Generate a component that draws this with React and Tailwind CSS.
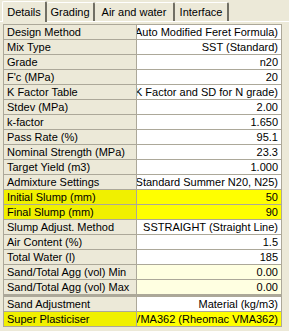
const rows = [
  ['Design Method', '(Auto Modified Feret Formula)'],
  ['Mix Type', 'SST (Standard)'],
  ['Grade', 'n20'],
  ["F'c (MPa)", '20'],
  ['K Factor Table', '(K Factor and SD for N grade)'],
  ['Stdev (MPa)', '2.00'],
  ['k-factor', '1.650'],
  ['Pass Rate (%)', '95.1'],
  ['Nominal Strength (MPa)', '23.3'],
  ['Target Yield (m3)', '1.000'],
  ['Admixture Settings', '(Standard Summer N20, N25)'],
  ['Initial Slump (mm)', '50', 'yellow'],
  ['Final Slump (mm)', '90', 'yellow'],
  ['Slump Adjust. Method', 'SSTRAIGHT (Straight Line)'],
  ['Air Content (%)', '1.5'],
  ['Total Water (l)', '185'],
  ['Sand/Total Agg (vol) Min', '0.00', 'cream'],
  ['Sand/Total Agg (vol) Max', '0.00', 'cream', 'sep'],
  ['Sand Adjustment', 'Material (kg/m3)'],
  ['Super Plasticiser', 'VMA362 (Rheomac VMA362)', 'yellow'],
]

const tabs = [
  ['Details', 'w-[45px]'],
  ['Grading', 'w-[48px]'],
  ['Air and water', 'w-[80px]'],
  ['Interface', 'w-[54px]'],
]

export default function App() {
  return (
    <div
      className="w-[289px] h-[331px] bg-[#ece9d8] text-black text-[11px] leading-none overflow-hidden"
      style={{ fontFamily: '"Liberation Sans", Arial, sans-serif' }}
    >
      {/* Tabs */}
      <div className="flex items-end h-[22px] pl-[2px] border-b border-white">
        {tabs.map(([t, w], i) =>
          i === 0 ? (
            <div
              key={t}
              className={
                'h-[21px] -mb-px flex items-center justify-center bg-[#ece9d8] border-l border-t border-white border-r-2 border-r-[#716f64] rounded-t-[2px] relative z-10 ' +
                w
              }
            >
              {t}
            </div>
          ) : (
            <div
              key={t}
              className={
                'h-[19px] flex items-center justify-center border-t border-white border-r-2 border-r-[#716f64] rounded-t-[2px] ' +
                w
              }
            >
              {t}
            </div>
          )
        )}
      </div>

      {/* Property grid */}
      <div className="ml-[3px] mt-[2px] w-[279px] border-l border-t border-[#aca899]">
        {rows.map(([label, value, tone, sep]) => {
          const labelBg =
            tone === 'yellow' ? 'bg-[#f0f000]' : 'bg-[#ece9d8]'
          const valueBg =
            tone === 'yellow'
              ? 'bg-[#ffff00]'
              : tone === 'cream'
              ? 'bg-[#ffffe1]'
              : 'bg-white'
          return (
            <div
              key={label}
              className={
                'flex h-[15px] border-[#aca899] ' +
                (sep ? 'h-[17px] border-b-[3px]' : 'border-b')
              }
            >
              <div
                className={
                  'w-[133px] shrink-0 pl-[3px] flex items-center whitespace-nowrap border-r border-[#aca899] ' +
                  labelBg
                }
              >
                {label}
              </div>
              <div
                className={
                  'flex-1 min-w-0 overflow-hidden flex items-center justify-end pr-[3px] whitespace-nowrap border-r border-[#aca899] ' +
                  valueBg
                }
              >
                <span className="shrink-0">{value}</span>
              </div>
            </div>
          )
        })}
      </div>
    </div>
  )
}
